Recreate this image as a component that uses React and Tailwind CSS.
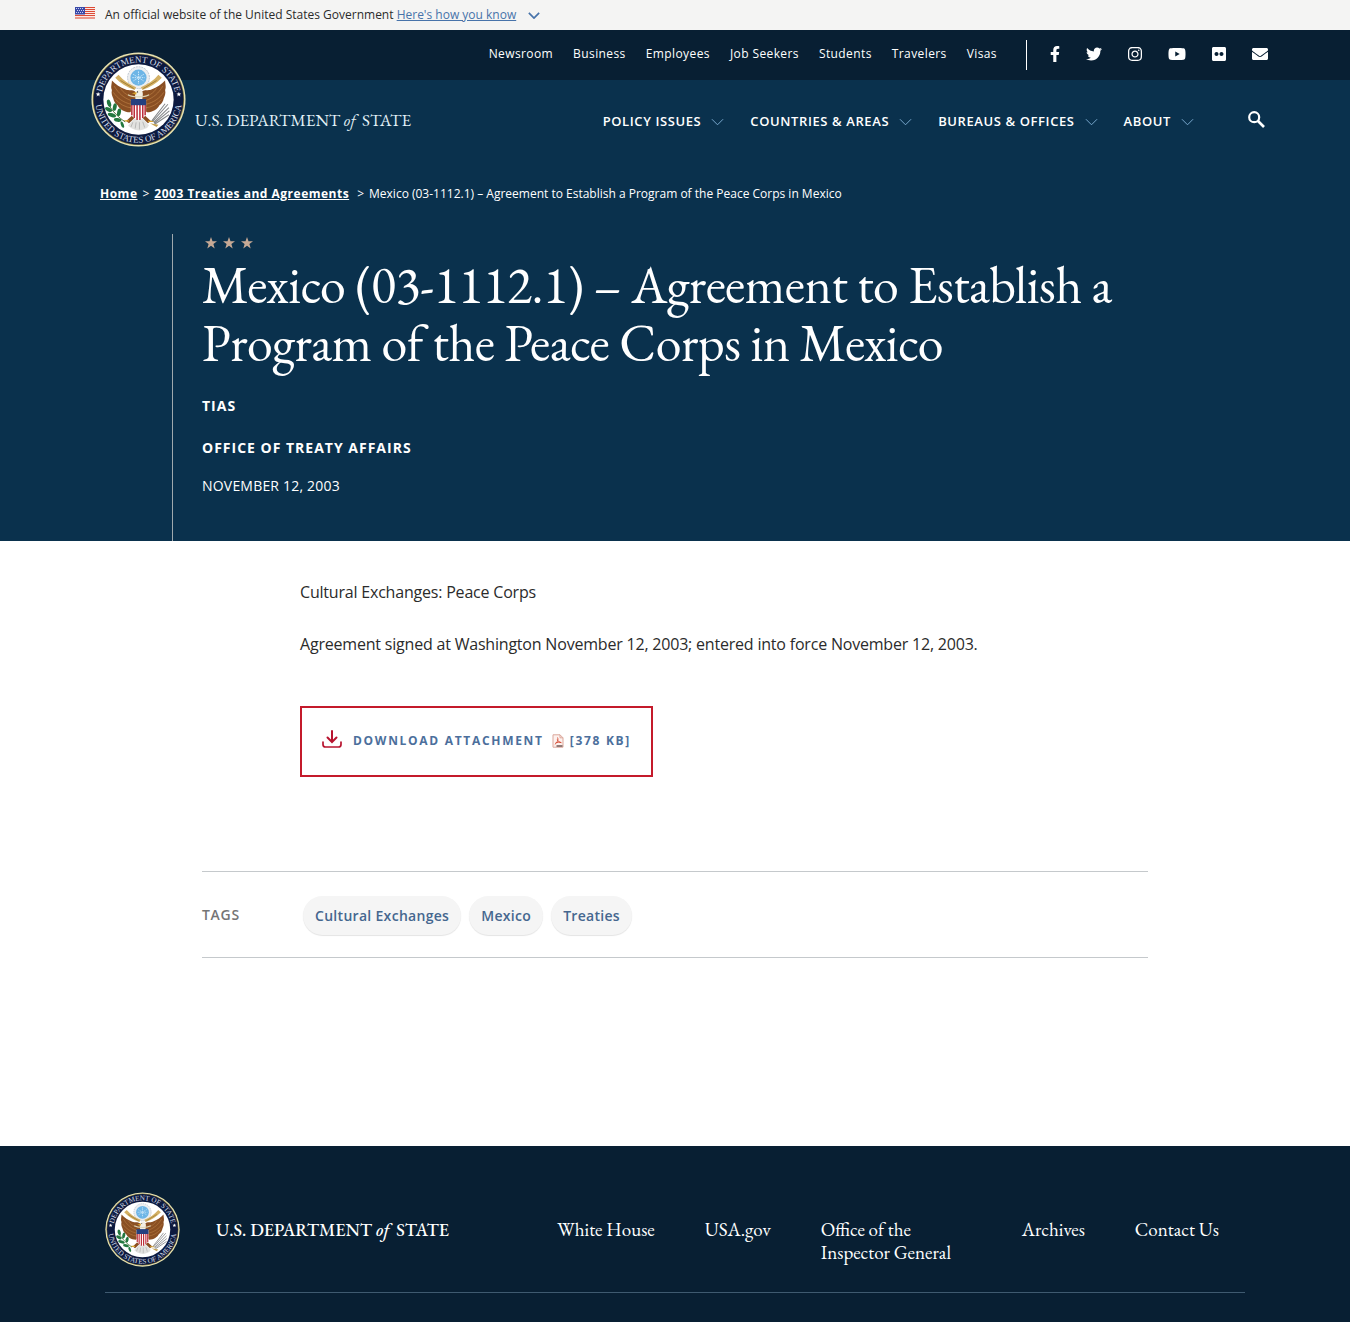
import React from "react";
import {
  FaFacebookF,
  FaTwitter,
  FaInstagram,
  FaYoutube,
  FaFlickr,
  FaEnvelope,
} from "react-icons/fa";

const topLinks = ["Newsroom", "Business", "Employees", "Job Seekers", "Students", "Travelers", "Visas"];
const menus = ["Policy Issues", "Countries & Areas", "Bureaus & Offices", "About"];
const social = [
  ["Facebook", FaFacebookF, "h-4 w-[10px]"],
  ["Twitter", FaTwitter, "h-4 w-4"],
  ["Instagram", FaInstagram, "h-4 w-[14px]"],
  ["YouTube", FaYoutube, "h-4 w-[18px]"],
  ["Flickr", FaFlickr, "h-4 w-[14px]"],
  ["Email", FaEnvelope, "h-4 w-4"],
];
const tags = ["Cultural Exchanges", "Mexico", "Treaties"];

function Wing() {
  return (
    <g>
      <path
        d="M94 84 C86 78 80 82 73 79 C61 75 52 68 44 60 C44 68 41 73 44 80 C42 88 45 93 47 98 C48 104 51 109 56 112 C60 120 70 127 82 127 L94 118 Z"
        fill="#8a4f23"
      />
      <path
        d="M49 72 C58 87 68 96 84 102 M47 85 C56 98 68 106 84 110 M52 100 C60 110 72 116 86 118 M62 76 C69 88 78 92 90 94"
        stroke="#b87c42"
        strokeWidth="1.5"
        fill="none"
      />
      <path d="M51 54 C62 66 76 74 92 80 L95 74 C80 68 68 60 58 48 Z" fill="#d3b064" />
      <path d="M62 60 L90 77" stroke="#8d6a24" strokeWidth="1.5" />
    </g>
  );
}

function Seal({ id, className }) {
  return (
    <svg viewBox="0 0 200 200" className={className} role="img" aria-label="Department of State seal">
      <defs>
        <path id={id + "-top"} d="M22 100 A78 78 0 0 1 178 100" />
        <path id={id + "-bottom"} d="M9 100 A91 91 0 0 0 191 100" />
      </defs>
      <circle cx="100" cy="100" r="99" fill="#e9e3b4" />
      <circle cx="100" cy="100" r="96" fill="#7f7640" />
      <circle cx="100" cy="100" r="94.5" fill="#0d1a3f" />
      <circle cx="100" cy="100" r="74" fill="#ffffff" />
      <g fill="#d3dce8" fontFamily="Liberation Serif, serif" fontSize="19" textAnchor="middle">
        <text>
          <textPath href={"#" + id + "-top"} startOffset="50%">DEPARTMENT OF STATE</textPath>
        </text>
        <text>
          <textPath href={"#" + id + "-bottom"} startOffset="50%">UNITED STATES OF AMERICA</textPath>
        </text>
      </g>
      <path d="M15 84l1.5 3.5h3.5l-2.8 2.3 1 3.7-3.2-2.2-3.2 2.2 1-3.7-2.8-2.3h3.5z" fill="#fff" />
      <path d="M185 84l1.5 3.5h3.5l-2.8 2.3 1 3.7-3.2-2.2-3.2 2.2 1-3.7-2.8-2.3h3.5z" fill="#fff" />

      <circle cx="100" cy="54" r="23" fill="#eceef0" stroke="#b9c2cc" strokeWidth="2" strokeDasharray="4 2" />
      <circle cx="100" cy="54" r="17" fill="#6db5e6" />
      <path
        d="M100 41v26M89 47l22 14M111 47L89 61M87 54h26"
        stroke="#d7edfb"
        strokeWidth="2"
        strokeDasharray="3 2"
      />

      <Wing />
      <g transform="translate(200 0) scale(-1 1)">
        <Wing />
      </g>

      <path d="M94 96 C91 88 94 80 101 79 C107 79 110 84 109 91 L108 100 H94 Z" fill="#f2efe4" />
      <path d="M96 84 L86 87 L95 90 Z" fill="#d9a42c" />
      <circle cx="98" cy="84" r="1.3" fill="#222" />
      <path d="M78 90 C88 96 112 96 122 90" stroke="#dcd3b4" strokeWidth="3" fill="none" />

      <path d="M86 134 L74 145 L80 150 L92 139 Z M114 134 L126 145 L120 150 L108 139 Z" fill="#8a4f23" />
      <path d="M70 145h10M120 146h12" stroke="#d9a42c" strokeWidth="3" />
      <path d="M92 138 L78 155 L86 161 L94 164 L102 165 L110 163 L118 160 L122 154 L108 138 Z" fill="#e2e2e0" />
      <path d="M88 148l-4 10M95 148l-2 13M102 148v15M109 147l4 12" stroke="#a8a8a6" strokeWidth="1.5" />

      <path d="M84 101 H116 V124 C116 136 108 141 100 144 C92 141 84 136 84 124 Z" fill="#ffffff" />
      <path d="M86 111v22M91 111v28M97 111v32M103 111v32M109 111v28M114 111v22" stroke="#b8222f" strokeWidth="3" />
      <path d="M84 99 H116 V112 H84 Z" fill="#24407f" />

      <path d="M35 108 C46 126 58 138 72 147" stroke="#4b6b2d" strokeWidth="2" fill="none" />
      <g fill="#23783f">
        <ellipse cx="38" cy="108" rx="4" ry="8" transform="rotate(-18 38 108)" />
        <ellipse cx="37" cy="121" rx="4" ry="8" transform="rotate(-62 37 121)" />
        <ellipse cx="50" cy="116" rx="4" ry="8" transform="rotate(12 50 116)" />
        <ellipse cx="44" cy="133" rx="4" ry="9" transform="rotate(-72 44 133)" />
        <ellipse cx="59" cy="127" rx="4" ry="8" transform="rotate(12 59 127)" />
        <ellipse cx="56" cy="143" rx="4" ry="8" transform="rotate(-80 56 143)" />
        <ellipse cx="66" cy="153" rx="3" ry="7" transform="rotate(-20 66 153)" />
      </g>
      <g stroke="#85878a" strokeWidth="2.2" fill="none">
        <path d="M130 146 L162 110M132 148 L164 117M133 150 L165 124M134 152 L164 132M128 145 L156 109" />
      </g>
      <path d="M124 150 L142 153 L138 158 Z" fill="#c3a050" />
    </svg>
  );
}

function Wordmark({ className }) {
  return (
    <span className={"font-['EB_Garamond','Liberation_Serif',serif] whitespace-nowrap " + className}>
      U.S. DEPARTMENT <em className="mr-[3px]">of</em> STATE
    </span>
  );
}

function Flag() {
  return (
    <svg viewBox="0 0 20 12" className="-mt-1 h-3 w-5" aria-hidden="true">
      <rect width="20" height="12" fill="#fbe9e4" />
      <path d="M0 .5h20M0 2.5h20M0 4.5h20M0 6.5h20M0 8.5h20M0 11h20" stroke="#dc4a35" strokeWidth="1.1" />
      <rect width="10" height="7.5" fill="#3a4aa8" />
      <path d="M1 1.5h8M2 3.5h7M1 5.5h8" stroke="#c9cdf0" strokeWidth="1" strokeDasharray="1 1" />
    </svg>
  );
}

function Chevron({ className }) {
  return (
    <svg viewBox="0 0 14 8" className={className} fill="none" stroke="currentColor" aria-hidden="true">
      <path d="M1 1l6 6 6-6" />
    </svg>
  );
}

function SearchIcon() {
  return (
    <svg viewBox="0 0 17 17" className="size-[17px]" fill="none" stroke="currentColor" aria-hidden="true">
      <circle cx="6.2" cy="6.2" r="5" strokeWidth="2.200" />
      <path d="M10 10l6 6" strokeWidth="2.600" />
    </svg>
  );
}

function DownloadIcon() {
  return (
    <svg viewBox="0 0 20 18" className="-mt-1 h-[18px] w-5" fill="none" stroke="#b8142f" strokeWidth="2" strokeLinecap="round" aria-hidden="true">
      <path d="M10 1v10M5.5 7.5L10 12l4.500-4.500" />
      <path d="M1 12v2.500q0 2.500 2.500 2.500h13q2.500 0 2.500-2.500V12" strokeWidth="1.7" />
    </svg>
  );
}

function PdfIcon() {
  return (
    <svg viewBox="0 0 12 14" className="h-[14px] w-3" fill="none" aria-hidden="true">
      <path d="M1 .8h7l3 3v9.400H1z" fill="#fdf1ee" stroke="#dba79b" />
      <path d="M8 .8v3h3" stroke="#dba79b" />
      <path d="M5.500 3.500c1 2 .2 4.500-2.700 7M5.300 5.500c.8 2 2.200 3 4.200 3.200M3.500 9c2-.8 3.500-1 5.500-.6" stroke="#d4472f" strokeWidth=".9" />
      <path d="M4.500 12h6" stroke="#77605c" strokeWidth="1.600" />
    </svg>
  );
}

function Star() {
  return (
    <svg viewBox="0 0 12 12" className="size-3" fill="#c6a995" aria-hidden="true">
      <path d="M6 0l1.500 4.300H12L8.400 7l1.300 4.500L6 8.800l-3.700 2.700L3.600 7 0 4.300h4.500z" />
    </svg>
  );
}

export default function App() {
  return (
    <div className="bg-white font-['Open_Sans',sans-serif] text-[#2b2b2b]">
      <div className="flex h-[30px] items-center bg-[#f4f4f3] pl-[75px] text-xs">
        <Flag />
        <p className="ml-[10px]">
          An official website of the United States Government{" "}
          <a href="#about-site" className="text-[#4773aa] underline">Here's how you know</a>
        </p>
        <Chevron className="ml-3 h-[7px] w-3 stroke-2 text-[#4773aa]" />
      </div>

      <header className="text-white">
        <div className="flex h-[50px] items-center justify-end bg-[#081f33] pr-[82px]">
          <nav aria-label="Audiences" className="flex gap-5 pb-[2px] text-xs tracking-[0.4px]">
            {topLinks.map((t) => (
              <a key={t} href="#top">{t}</a>
            ))}
          </nav>
          <div className="ml-[29px] flex h-[30px] items-center gap-[26px] border-l border-white pb-[2px] pl-[23px]">
            {social.map(([name, Icon, size]) => (
              <a key={name} href="#social" aria-label={name}>
                <Icon className={size} />
              </a>
            ))}
          </div>
        </div>

        <div className="bg-[#0a314d]">
          <div className="flex h-[82px] items-center justify-between pr-[85px] pl-[91px]">
            <a href="#home" className="-mt-[44px] flex items-end gap-[9px]">
              <Seal id="seal-header" className="size-[95px]" />
              <Wordmark className="pb-[15px] text-[17px] leading-6 text-[#e3f1f8]" />
            </a>
            <div className="flex items-center">
              <nav aria-label="Main" className="flex gap-[26px]">
                {menus.map((m) => (
                  <button key={m} type="button" className="flex items-center gap-[10px] pt-[2px] text-[13px] font-semibold tracking-[0.6px] uppercase">
                    {m}
                    <Chevron className="h-2 w-[13px] text-[#7fb0d6]" />
                  </button>
                ))}
              </nav>
              <button type="button" aria-label="Search" className="-mt-1 ml-[54px]">
                <SearchIcon />
              </button>
            </div>
          </div>

          <nav aria-label="Breadcrumb" className="flex gap-[5px] pt-[23px] pl-[100px] text-xs leading-[18px]">
            <a href="#home" className="font-bold tracking-[0.5px] underline">Home</a>
            <span>&gt;</span>
            <a href="#treaties" className="mr-[3px] font-bold tracking-[0.5px] underline">2003 Treaties and Agreements</a>
            <span>&gt;</span>
            <span>Mexico (03-1112.1) – Agreement to Establish a Program of the Peace Corps in Mexico</span>
          </nav>

          <div className="mt-[31px] mr-[172px] ml-[172px] border-l border-[#9fa9ae] pb-[45px] pl-[29px]">
            <div className="flex h-[22px] gap-[6px] pt-[3px] pl-[3px]">
              <Star />
              <Star />
              <Star />
            </div>
            <h1 className="font-['EB_Garamond','Liberation_Serif',serif] text-[52px] leading-[58px] tracking-[-0.5px]">
              Mexico (03-1112.1) – Agreement to Establish a Program of the Peace Corps in Mexico
            </h1>
            <p className="mt-6 text-sm leading-5 font-bold tracking-[1px]">TIAS</p>
            <p className="mt-[22px] text-sm leading-5 font-bold tracking-[1px] uppercase">Office of Treaty Affairs</p>
            <p className="mt-[18px] text-sm leading-5 tracking-[0.2px]">NOVEMBER 12, 2003</p>
          </div>
        </div>
      </header>

      <main className="px-[202px] pt-[38px]">
        <div className="pl-[98px] text-base leading-[26px] tracking-[-0.2px]">
          <p>Cultural Exchanges: Peace Corps</p>
          <p className="mt-[26px]">
            Agreement signed at Washington November 12, 2003; entered into force November 12, 2003.
          </p>
          <a
            href="#attachment"
            className="mt-[49px] inline-flex h-[71px] items-center border-2 border-[#c41a2b] px-5 pb-[2px] text-xs font-bold tracking-[1.7px] text-[#4c6f9c] uppercase"
          >
            <DownloadIcon />
            <span className="mr-2 ml-[11px]">Download Attachment</span>
            <PdfIcon />
            <span className="ml-[6px]">[378 KB]</span>
          </a>
        </div>

        <div className="mt-[94px] flex h-[87px] items-center border-y border-[#c5c9cc] text-sm font-semibold">
          <h2 className="w-[101px] tracking-[0.7px] text-[#757575]">TAGS</h2>
          <ul className="flex gap-2 pt-[2px] tracking-[0.3px] text-[#45678f]">
            {tags.map((t) => (
              <li key={t}>
                <a href="#tag" className="flex h-[39px] items-center rounded-full bg-[#f5f5f5] px-3 shadow-[0_1px_1px_#e4e4e4]">{t}</a>
              </li>
            ))}
          </ul>
        </div>
      </main>

      <footer className="mt-[188px] bg-[#081f33] px-[105px] pt-[46px] pb-[29px] text-white">
        <div className="flex items-start border-b border-[#3f5a70] pb-[25px]">
          <Seal id="seal-footer" className="size-[75px]" />
          <Wordmark className="mt-[26px] ml-9 text-[18px] leading-6 font-medium" />
          <nav
            aria-label="Footer"
            className="mt-[26px] mr-[26px] ml-auto flex items-start gap-[50px] font-['EB_Garamond','Liberation_Serif',serif] text-[19px] leading-[23px]"
          >
            <a href="#whitehouse">White House</a>
            <a href="#usagov">USA.gov</a>
            <a href="#oig" className="w-[151px]">Office of the Inspector General</a>
            <a href="#archives">Archives</a>
            <a href="#contact">Contact Us</a>
          </nav>
        </div>
      </footer>
    </div>
  );
}
